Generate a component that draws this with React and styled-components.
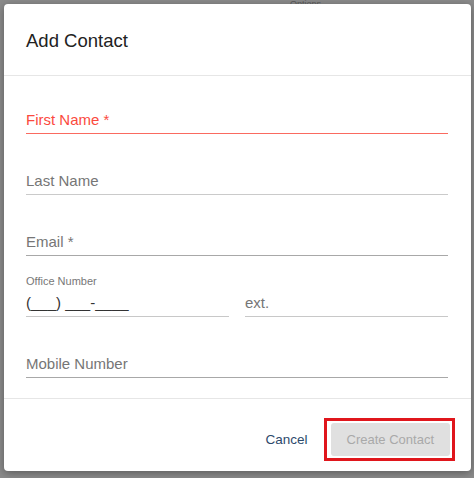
import React from "react";
import styled, { createGlobalStyle } from "styled-components";

const Global = createGlobalStyle`
  html, body { margin: 0; padding: 0; }
  body {
    background: #8b8b8b;
    font-family: "Liberation Sans", Arial, sans-serif;
  }
`;

const Backdrop = styled.div`
  width: 474px;
  height: 478px;
  box-sizing: border-box;
  padding: 4px 4px 0 4px;
  background: #8b8b8b;
  position: relative;
  overflow: hidden;
`;

const PageHint = styled.span`
  position: absolute;
  top: 0;
  left: 290px;
  font-size: 9px;
  line-height: 9px;
  color: #5a5a5a;
`;

const Modal = styled.div`
  position: relative;
  width: 467px;
  height: 467px;
  background: #fff;
  border-radius: 4px;
  box-shadow: 0 2px 8px rgba(0, 0, 0, 0.35);
  display: flex;
  flex-direction: column;
`;

const Header = styled.div`
  height: 71px;
  display: flex;
  align-items: center;
  padding: 0 22px;
  border-bottom: 1px solid #e6e6e6;
`;

const Title = styled.h2`
  margin: 0;
  font-size: 18.5px;
  font-weight: normal;
  color: #222;
  padding-top: 2px;
`;

const Body = styled.div`
  padding: 15px 23px 20px 22px;
  display: flex;
  flex-direction: column;
  gap: 18px;
  border-bottom: 1px solid #e6e6e6;
`;

const Row = styled.div`
  display: flex;
  gap: 16px;
`;

const Field = styled.div`
  flex: 1;
  display: flex;
  flex-direction: column;
`;

const SmallLabel = styled.div`
  height: 14px;
  line-height: 14px;
  font-size: 11px;
  color: #777;
`;

const Input = styled.div`
  height: 28px;
  display: flex;
  align-items: center;
  font-size: 15px;
  color: ${(p) => (p.$error ? "#fb4a3e" : p.$value ? "#333" : "#767676")};
  border-bottom: 1px solid ${(p) => p.$line || "#c4c4c4"};
`;

const Footer = styled.div`
  flex: 1;
  display: flex;
  align-items: center;
  justify-content: flex-end;
  padding: 9px 16px 0 0;
`;

const CancelButton = styled.button`
  background: none;
  border: none;
  padding: 0;
  margin-right: 16px;
  font-family: inherit;
  font-size: 13.5px;
  color: #2d4a6b;
  cursor: pointer;
`;

const Highlight = styled.div`
  border: 3px solid #e0161c;
  padding: 2px 2px 2px 4px;
  display: flex;
`;

const PrimaryButton = styled.button`
  height: 33px;
  padding: 0 16px;
  border: none;
  border-radius: 3px;
  background: #e0e0e0;
  color: #a9a9a9;
  font-family: inherit;
  font-size: 13px;
`;

export default function App() {
  return (
    <>
      <Global />
      <Backdrop>
        <PageHint>Options</PageHint>
        <Modal>
          <Header>
            <Title>Add Contact</Title>
          </Header>
          <Body>
            <Field>
              <SmallLabel />
              <Input $error $line="#fa6a60">First Name *</Input>
            </Field>
            <Field>
              <SmallLabel />
              <Input $line="#cacaca">Last Name</Input>
            </Field>
            <Field>
              <SmallLabel />
              <Input $line="#a8a8a8">Email *</Input>
            </Field>
            <Row>
              <Field>
                <SmallLabel>Office Number</SmallLabel>
                <Input $value $line="#c8c8c8">(___) ___-____</Input>
              </Field>
              <Field>
                <SmallLabel />
                <Input $line="#c8c8c8">ext.</Input>
              </Field>
            </Row>
            <Field>
              <SmallLabel />
              <Input $line="#a8a8a8">Mobile Number</Input>
            </Field>
          </Body>
          <Footer>
            <CancelButton>Cancel</CancelButton>
            <Highlight>
              <PrimaryButton disabled>Create Contact</PrimaryButton>
            </Highlight>
          </Footer>
        </Modal>
      </Backdrop>
    </>
  );
}
